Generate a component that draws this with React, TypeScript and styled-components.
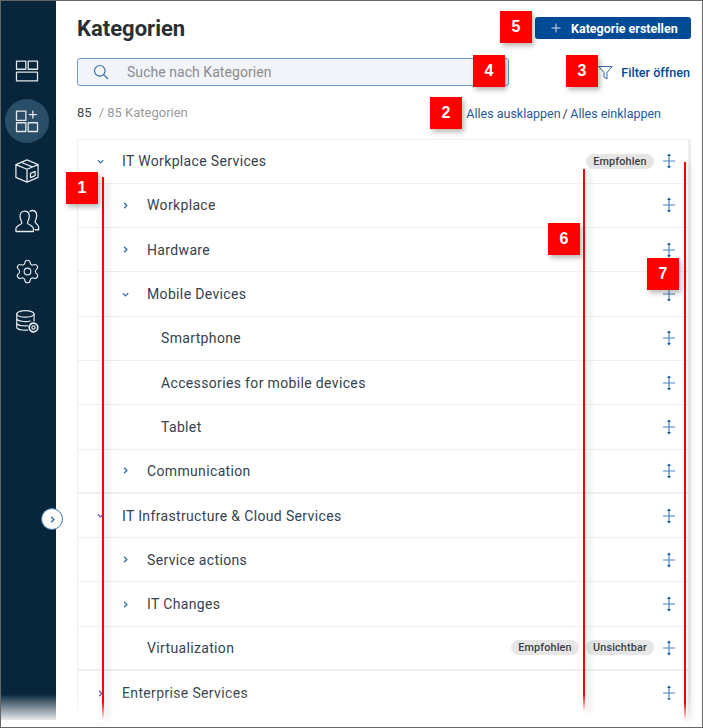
import React from "react";
import styled, { createGlobalStyle } from "styled-components";
import { Settings } from "lucide-react";

const Global = createGlobalStyle`
  html, body { margin: 0; padding: 0; background: #fff; }
  * { box-sizing: border-box; }
  body { font-family: Roboto, "Liberation Sans", sans-serif; color: #2f3a45; }
`;

const Frame = styled.div`
  position: relative;
  width: 703px;
  height: 728px;
  border: 1px solid #666;
  display: flex;
  overflow: hidden;
  background: #fff;
`;

const Sidebar = styled.nav`
  position: relative;
  width: 55px;
  height: 719px;
  flex: none;
  background: #07253b;
  display: flex;
  flex-direction: column;
  align-items: center;
  padding: 48px 3px 0 0;
  gap: 6px;
`;

const SideFade = styled.div`
  position: absolute;
  left: 0;
  right: 0;
  bottom: 0;
  height: 26px;
  background: linear-gradient(to bottom, rgba(255,255,255,0), rgba(255,255,255,0.9));
`;

const NavItem = styled.div<{ $active?: boolean }>`
  width: 44px;
  height: 44px;
  border-radius: 50%;
  display: flex;
  align-items: center;
  justify-content: center;
  background: ${(p) => (p.$active ? "#2a4d68" : "transparent")};
`;

const Toggle = styled.div`
  position: absolute;
  left: 40px;
  top: 507px;
  width: 22px;
  height: 22px;
  border-radius: 50%;
  background: #fff;
  border: 1.5px solid #3f77ad;
  display: flex;
  align-items: center;
  justify-content: center;
  z-index: 3;
`;

const Main = styled.main`
  flex: 1;
  min-width: 0;
  padding: 14px 11px 0 21px;
  display: flex;
  flex-direction: column;
`;

const TitleRow = styled.div`
  height: 27px;
  display: flex;
  align-items: center;
  justify-content: space-between;
`;

const Title = styled.h1`
  margin: 0;
  font-size: 22px;
  font-weight: 700;
  color: #2b2f33;
`;

const PrimaryButton = styled.button`
  width: 156px;
  height: 22px;
  border: 0;
  border-radius: 3px;
  background: #004a96;
  color: #fff;
  font: 700 12.5px Roboto, sans-serif;
  display: flex;
  align-items: center;
  padding: 0 0 0 16px;
  gap: 10px;
  margin-top: -1px;
`;

const SearchRow = styled.div`
  margin-top: 16px;
  height: 28px;
  display: flex;
  align-items: center;
  justify-content: space-between;
`;

const SearchBox = styled.div`
  width: 432px;
  height: 28px;
  border: 1px solid #6f9cc8;
  border-radius: 3px;
  background: #f1f4f9;
  display: flex;
  align-items: center;
  padding-left: 15px;
  gap: 18px;
  font-size: 14px;
  letter-spacing: 0.05px;
  color: #8b8b90;
`;

const FilterLink = styled.div`
  display: flex;
  align-items: center;
  gap: 8px;
  font-size: 12.6px;
  font-weight: 500;
  color: #004a96;
  margin-right: 1px;
`;

const MetaRow = styled.div`
  margin-top: 13px;
  height: 28px;
  display: flex;
  align-items: center;
  justify-content: space-between;
  padding-right: 30px;
`;

const Count = styled.div`
  font-size: 13px;
  color: #9a9a9a;
  margin-top: -1px;
  & b { font-weight: 400; color: #3d4750; margin-right: 7px; }
`;

const LinkGroup = styled.div`
  font-size: 12.5px;
  color: #1d5a9c;
`;

const Slash = styled.span`
  margin: 0 2.5px 0 2px;
  color: #2f3a45;
`;

const List = styled.div`
  margin-top: 11.5px;
  border: 1px solid #eeeeee;
  border-bottom: 0;
  border-right-width: 3px;
  display: flex;
  flex-direction: column;
  position: relative;
`;

const Row = styled.div<{ $group?: boolean }>`
  height: 44.3px;
  flex: none;
  display: flex;
  align-items: center;
  padding-right: 12px;
  border-bottom: ${(p) => (p.$group ? "2px" : "1px")} solid #efefef;
`;

const RowLast = styled(Row)`
  border-bottom: 0;
`;

const Chevron = styled.span<{ $level: number }>`
  width: 12px;
  height: 12px;
  flex: none;
  margin-left: ${(p) => (p.$level === 0 ? 16 : 41)}px;
  display: flex;
  align-items: center;
  justify-content: center;
`;

const Label = styled.span<{ $indent: number }>`
  margin-left: ${(p) => p.$indent}px;
  font-size: 14px;
  letter-spacing: 0.35px;
  color: #36424d;
  flex: 1;
  white-space: nowrap;
`;

const Tag = styled.span`
  height: 15px;
  width: 68px;
  margin-left: 7px;
  border-radius: 8px;
  background: #e6e6e6;
  color: #3a3f45;
  font-size: 10.8px;
  font-weight: 500;
  letter-spacing: 0.15px;
  line-height: 15px;
  text-align: center;
`;

const Handle = styled.span`
  width: 14px;
  height: 16px;
  margin-left: 8px;
  display: flex;
`;

const ListFade = styled.div`
  position: absolute;
  left: 56px;
  right: 0;
  top: 692px;
  height: 28px;
  background: linear-gradient(to bottom, rgba(255,255,255,0), rgba(255,255,255,1));
  z-index: 1;
  pointer-events: none;
`;

const Marker = styled.div<{ $x: number; $y: number }>`
  position: absolute;
  left: ${(p) => p.$x}px;
  top: ${(p) => p.$y}px;
  width: 32px;
  height: 32px;
  background: #fe0000;
  color: #fff;
  font: 700 16px "Liberation Sans", sans-serif;
  display: flex;
  align-items: center;
  justify-content: center;
  box-shadow: 2px 3px 5px rgba(0, 0, 0, 0.28);
  z-index: 5;
`;

const RedLine = styled.div<{ $x: number; $y: number; $h: number }>`
  position: absolute;
  left: ${(p) => p.$x}px;
  top: ${(p) => p.$y}px;
  height: ${(p) => p.$h}px;
  width: 1.5px;
  background: linear-gradient(to bottom, #fe0000 97%, rgba(254, 0, 0, 0.1));
  box-shadow: 4px 2px 6px rgba(0, 0, 0, 0.2);
  z-index: 4;
`;

const Ico = ({ children, size = 28 }: { children: React.ReactNode; size?: number }) => (
  <svg width={size} height={size} viewBox="0 0 24 24" fill="none" stroke="#e4e8ec" strokeWidth="1.1" strokeLinejoin="round" strokeLinecap="round">
    {children}
  </svg>
);

const ChevronIcon = ({ down }: { down?: boolean }) => (
  <svg width="9" height="9" viewBox="0 0 10 10" fill="none" stroke="#2f6aa8" strokeWidth="1.4">
    {down ? <path d="M2 3.5 5 6.5 8 3.5" /> : <path d="M3.5 2 6.5 5 3.5 8" />}
  </svg>
);

const HandleIcon = () => (
  <Handle>
    <svg width="14" height="16" viewBox="0 0 14 16" fill="none" stroke="#4a82ba" strokeWidth="1.2">
      <path d="M7 1v14M1 8h12" />
      <path d="M5 3 7 .6 9 3zM5 13l2 2.400L9 13z" fill="#1f5f9f" stroke="none" />
    </svg>
  </Handle>
);

type R = { label: string; level: number; chevron?: "down" | "right"; tags?: string[]; group?: boolean };

const rows: R[] = [
  { label: "IT Workplace Services", level: 0, chevron: "down", tags: ["Empfohlen"] },
  { label: "Workplace", level: 1, chevron: "right" },
  { label: "Hardware", level: 1, chevron: "right" },
  { label: "Mobile Devices", level: 1, chevron: "down" },
  { label: "Smartphone", level: 2 },
  { label: "Accessories for mobile devices", level: 2 },
  { label: "Tablet", level: 2 },
  { label: "Communication", level: 1, chevron: "right", group: true },
  { label: "IT Infrastructure & Cloud Services", level: 0, chevron: "down" },
  { label: "Service actions", level: 1, chevron: "right" },
  { label: "IT Changes", level: 1, chevron: "right" },
  { label: "Virtualization", level: 1, tags: ["Empfohlen", "Unsichtbar"], group: true },
  { label: "Enterprise Services", level: 0, chevron: "right" },
];

const indentOf = (level: number) => (level === 2 ? 30 : 16);

const markers = [
  { n: 1, x: 65, y: 171 },
  { n: 2, x: 429, y: 96 },
  { n: 3, x: 565, y: 54 },
  { n: 4, x: 472, y: 54 },
  { n: 5, x: 499, y: 10 },
  { n: 6, x: 547, y: 222 },
  { n: 7, x: 646, y: 257 },
];

const RowContent = ({ r }: { r: R }) => (
  <>
    <Chevron $level={r.level}>{r.chevron && <ChevronIcon down={r.chevron === "down"} />}</Chevron>
    <Label $indent={indentOf(r.level)}>{r.label}</Label>
    {r.tags?.map((t) => <Tag key={t}>{t}</Tag>)}
    <HandleIcon />
  </>
);

export default function App() {
  return (
    <>
      <Global />
      <Frame>
        <Sidebar>
          <NavItem>
            <Ico><path d="M3 3.5h8v7H3zM13 3.5h8v7h-8zM3 13h18v7.500H3z" /></Ico>
          </NavItem>
          <NavItem $active>
            <Ico><path d="M3 3.500h8v8H3zM3 13.500h8v7.500H3zM13 13.500h8v7.500h-8zM17 3.500v6M14 6.500h6" /></Ico>
          </NavItem>
          <NavItem>
            <Ico><path d="M12 2.500 21.500 6.500v11L12 21.500 2.500 17.500v-11zM2.500 6.500 12 10.500l9.500-4M12 10.500v11M7 4.500l9.500 4M15 14l4-1.600v3.600l-4 1.600z" /></Ico>
          </NavItem>
          <NavItem>
            <Ico><path d="M2.500 21v-2.500c0-2 3.500-3 5-4.500 .8-.8-1.500-2.500-1.500-6 0-3 1.800-4.500 4-4.500s4 1.500 4 4.500c0 3.500-2.300 5.200-1.500 6 1.500 1.500 5 2.500 5 4.500V21zM14.500 3.700c.7-.4 1.300-.7 2-.7 2.200 0 3.800 1.500 3.800 4.500 0 3.300-2 5-1.300 5.700 1 1 3 2.200 3 4.300V19.500h-3" /></Ico>
          </NavItem>
          <NavItem>
            <Settings size={27} color="#e4e8ec" strokeWidth={1} />
          </NavItem>
          <NavItem>
            <Ico size={26}><ellipse cx="10.500" cy="5.500" rx="8" ry="3" /><path d="M2.500 5.500v12c0 1.700 3.500 3 8 3 .8 0 1.500 0 2-.1M18.500 5.500v6.500M2.500 9.500c0 1.700 3.500 3 8 3 1.500 0 3-.2 4.500-.5M2.500 13.500c0 1.700 3.500 3 8 3 .8 0 1.300 0 2-.1" /><circle cx="18" cy="18" r="1.500" /><circle cx="18" cy="18" r="4" strokeDasharray="2 1" strokeWidth="1.600" /></Ico>
          </NavItem>
          <SideFade />
        </Sidebar>
        <Toggle><ChevronIcon /></Toggle>
        <Main>
          <TitleRow>
            <Title>Kategorien</Title>
            <PrimaryButton>
              <svg width="10" height="10" viewBox="0 0 10 10" stroke="#cfd9e6" strokeWidth="1"><path d="M5 .5v9M.5 5h9" /></svg>
              <span>Kategorie erstellen</span>
            </PrimaryButton>
          </TitleRow>
          <SearchRow>
            <SearchBox>
              <svg width="16" height="16" viewBox="0 0 16 16" fill="none" stroke="#2f6aa8" strokeWidth="1.1"><circle cx="6.800" cy="6.800" r="5.300" /><path d="M10.700 10.700 15 15" /></svg>
              <span>Suche nach Kategorien</span>
            </SearchBox>
            <FilterLink>
              <svg width="15" height="15" viewBox="0 0 15 15" fill="none" stroke="#2f6aa8" strokeWidth="1" strokeLinejoin="round"><path d="M.8 1.500h13.400L9 7.500v6.500l-3-2V7.500z" /></svg>
              <span>Filter öffnen</span>
            </FilterLink>
          </SearchRow>
          <MetaRow>
            <Count><b>85</b>/ 85 Kategorien</Count>
            <LinkGroup>Alles ausklappen<Slash>/</Slash>Alles einklappen</LinkGroup>
          </MetaRow>
          <List>
            {rows.map((r, i) =>
              i === rows.length - 1 ? (
                <RowLast key={r.label}><RowContent r={r} /></RowLast>
              ) : (
                <Row key={r.label} $group={r.group}><RowContent r={r} /></Row>
              )
            )}
          </List>
        </Main>
        <ListFade />
        {markers.map((m) => (
          <Marker key={m.n} $x={m.x} $y={m.y}>{m.n}</Marker>
        ))}
        <RedLine $x={101} $y={176} $h={541} />
        <RedLine $x={582} $y={168} $h={541} />
        <RedLine $x={683} $y={161} $h={557} />
      </Frame>
    </>
  );
}
